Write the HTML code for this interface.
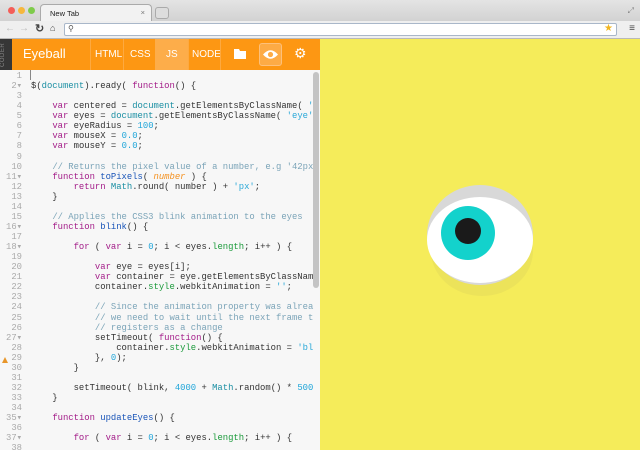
<!DOCTYPE html>
<html><head><meta charset="utf-8"><style>
*{margin:0;padding:0;box-sizing:border-box}
body{width:640px;height:450px;overflow:hidden;font-family:"Liberation Sans",sans-serif;background:#f5ec5a;position:relative}
.tabbar{position:absolute;left:0;top:0;width:640px;height:21px;background:linear-gradient(#e4e4e4,#d2d2d2)}
.tab{position:absolute;left:40px;top:4px;width:112px;height:17px;background:#f2f2f2;border:1px solid #aaa;border-bottom:none;border-radius:4px 4px 0 0;font-size:7.5px;padding:4px 0 0 9px;color:#222}
.tab2{position:absolute;left:155px;top:7px;width:14px;height:12px;border:1px solid #aaa;border-radius:3px;background:#ddd}
.dot{position:absolute;top:7px;width:7px;height:7px;border-radius:50%}
.toolbar{position:absolute;left:0;top:21px;width:640px;height:18px;background:#efefef;border-bottom:1px solid #b9b9b9}
.url{position:absolute;left:64px;top:2px;height:13px;background:#fff;border:1px solid #a9b7c9;border-radius:2px;width:553px}
.head{position:absolute;left:0;top:39px;width:320px;height:31px;background:#fd9713}
.coder{position:absolute;left:0;top:39px;width:12px;height:31px;background:#363636;color:#888;font-size:6px;writing-mode:vertical-rl;transform:rotate(180deg);text-align:center;letter-spacing:.5px}
.hd{position:absolute;color:#fff;font-size:10px;top:49px}
.ed{position:absolute;left:0;top:70px;width:320px;height:380px;background:#f7f7f7;overflow:hidden}
pre{font-family:"Liberation Mono",monospace;font-size:8.9px;line-height:10.07px;position:absolute;top:1px;color:#333}
.ln{left:0;width:22px;text-align:right;color:#aaa}
.code{left:31px;color:#333}
.k{color:#a31c88}.b{color:#1b8fa3}.n{color:#21a6d9}.c{color:#7ba4b8}.s{color:#2aa8d8}.g{color:#1b9a3b}.f{color:#1a55b8}.o{color:#f4901e;font-style:italic}
</style></head><body>
<div class="tabbar">
<div class="dot" style="left:8px;background:#f45e58"></div>
<div class="dot" style="left:18px;background:#f6b73c"></div>
<div class="dot" style="left:28px;background:#7ecb4a"></div>
<div class="tab">New Tab<span style="position:absolute;right:6px;top:3px;color:#777">×</span></div>
<div class="tab2"></div>
<div style="position:absolute;right:6px;top:6px;font-size:8px;color:#888">⤢</div>
</div>
<div class="toolbar">
<span style="position:absolute;left:5px;top:2px;font-size:10px;color:#bbb">←</span>
<span style="position:absolute;left:19px;top:2px;font-size:10px;color:#bbb">→</span>
<span style="position:absolute;left:35px;top:1px;font-size:11px;color:#444;font-weight:bold">↻</span>
<span style="position:absolute;left:50px;top:2px;font-size:9px;color:#444">⌂</span>
<div class="url"><span style="position:absolute;left:3px;top:0;font-size:8px;color:#555">⚲</span><span style="position:absolute;right:3px;top:-1px;font-size:10px;color:#f2b51f">★</span></div>
<span style="position:absolute;right:5px;top:2px;font-size:10px;color:#444">≡</span>
</div>
<div class="head"></div>
<div class="coder">CODER</div>
<div class="hd" style="left:23px;font-size:13px;top:46px">Eyeball</div>
<div style="position:absolute;left:90px;top:39px;width:1px;height:31px;background:#fda940"></div>
<div class="hd" style="left:95px">HTML</div>
<div style="position:absolute;left:123px;top:39px;width:1px;height:31px;background:#fda940"></div>
<div class="hd" style="left:130px">CSS</div>
<div style="position:absolute;left:155px;top:39px;width:33px;height:31px;background:#fdad4a"></div>
<div class="hd" style="left:166px">JS</div>
<div style="position:absolute;left:188px;top:39px;width:1px;height:31px;background:#fda940"></div>
<div class="hd" style="left:192px">NODE</div>
<div style="position:absolute;left:220px;top:39px;width:1px;height:31px;background:#fda940"></div>
<svg style="position:absolute;left:234px;top:48px" width="12" height="11"><path d="M0 1h5l1 2h6v8H0z" fill="#fff"/></svg>
<div style="position:absolute;left:259px;top:43px;width:23px;height:23px;border:1px solid #fdc07a;background:#fdab45;border-radius:3px"></div>
<svg style="position:absolute;left:262px;top:49px" width="17" height="11"><path d="M1 5.5Q8.5-3 16 5.5Q8.5 14 1 5.5z" fill="#fff"/><circle cx="8.5" cy="5.5" r="2.6" fill="#fdab45"/></svg>
<div style="position:absolute;left:294px;top:45px;color:#fff;font-size:14px">⚙</div>
<div class="ed">
<pre class="ln">1
2▾
3
4
5
6
7
8
9
10
11▾
12
13
14
15
16▾
17
18▾
19
20
21
22
23
24
25
26
27▾
28
29
30
31
32
33
34
35▾
36
37▾
38</pre>
<div style="position:absolute;left:30px;top:0;width:1px;height:10px;background:#888"></div>
<pre class="code">

$(<span class="b">document</span>).ready( <span class="k">function</span>() {

    <span class="k">var</span> centered = <span class="b">document</span>.getElementsByClassName( <span class="s">'</span>
    <span class="k">var</span> eyes = <span class="b">document</span>.getElementsByClassName( <span class="s">'eye'</span>
    <span class="k">var</span> eyeRadius = <span class="n">100</span>;
    <span class="k">var</span> mouseX = <span class="n">0.0</span>;
    <span class="k">var</span> mouseY = <span class="n">0.0</span>;

    <span class="c">// Returns the pixel value of a number, e.g '42px</span>
    <span class="k">function</span> <span class="f">toPixels</span>( <span class="o">number</span> ) {
        <span class="k">return</span> <span class="b">Math</span>.round( number ) + <span class="s">'px'</span>;
    }

    <span class="c">// Applies the CSS3 blink animation to the eyes</span>
    <span class="k">function</span> <span class="f">blink</span>() {

        <span class="k">for</span> ( <span class="k">var</span> i = <span class="n">0</span>; i &lt; eyes.<span class="g">length</span>; i++ ) {

            <span class="k">var</span> eye = eyes[i];
            <span class="k">var</span> container = eye.getElementsByClassNam
            container.<span class="g">style</span>.webkitAnimation = <span class="s">''</span>;

            <span class="c">// Since the animation property was alrea</span>
            <span class="c">// we need to wait until the next frame t</span>
            <span class="c">// registers as a change</span>
            setTimeout( <span class="k">function</span>() {
                container.<span class="g">style</span>.webkitAnimation = <span class="s">'bl</span>
            }, <span class="n">0</span>);
        }

        setTimeout( blink, <span class="n">4000</span> + <span class="b">Math</span>.random() * <span class="n">500</span>
    }

    <span class="k">function</span> <span class="f">updateEyes</span>() {

        <span class="k">for</span> ( <span class="k">var</span> i = <span class="n">0</span>; i &lt; eyes.<span class="g">length</span>; i++ ) {
</pre>
<div style="position:absolute;left:2px;top:287px;width:0;height:0;border-left:3.5px solid transparent;border-right:3.5px solid transparent;border-bottom:6px solid #e8962a"></div>
<div style="position:absolute;left:313px;top:2px;width:6px;height:216px;background:#c4c4c4;border-radius:3px"></div>
</div>
<div style="position:absolute;left:320px;top:39px;width:320px;height:411px;background:#f5ec5a"></div>
<svg style="position:absolute;left:320px;top:39px" width="320" height="411">
<ellipse cx="162" cy="212" rx="51" ry="45" fill="#ece35a"/>
<ellipse cx="160" cy="196" rx="53" ry="50" fill="#d8d8d8"/>
<ellipse cx="160" cy="201" rx="53" ry="43" fill="#fff"/>
<circle cx="148" cy="194" r="27" fill="#13d2cc"/>
<circle cx="148" cy="192" r="13" fill="#1a1a1a"/>
</svg>
</body></html>
